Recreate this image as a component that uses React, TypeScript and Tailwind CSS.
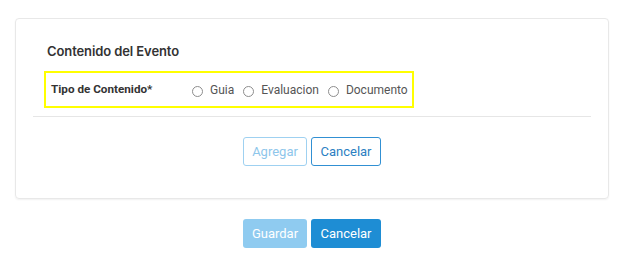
export default function App() {
  const options = ['Guia', 'Evaluacion', 'Documento']

  return (
    <div className="w-[628px] h-[271px] bg-white pt-[18px] font-['Roboto',sans-serif]">
      {/* Card */}
      <div className="ml-[15px] w-[594px] h-[181px] border border-[#e8e8e8] rounded-[4px] shadow-[0_1px_2px_rgba(0,0,0,0.06)] px-[17px] pt-[23px]">
        <div className="pl-[14px] text-[13px] leading-[18px] font-semibold text-[#333] font-['Inter',sans-serif] tracking-[-0.1px]">
          Contenido del Evento
        </div>

        {/* Tipo de contenido */}
        <div className="mt-[11px] ml-[11px] w-[370px] h-[37px] border-2 border-[#ffff00] flex items-center pl-[5px]">
          <span className="w-[141px] text-[11.7px] font-bold text-[#333]">Tipo de Contenido*</span>
          <div className="flex items-center text-[12px] text-[#555]">
            {options.map((o, i) => (
              <label key={o} className={`flex items-center ${i > 0 ? 'ml-[9px]' : ''}`}>
                <span className="w-[11px] h-[11px] rounded-full border border-[#8d8d8d] mt-[3px]" />
                <span className="ml-[7px]">{o}</span>
              </label>
            ))}
          </div>
        </div>

        <div className="mt-[8px] border-t border-[#e6e6e6]" />

        <div className="mt-[20px] flex justify-center gap-[4px]">
          <button className="h-[29px] w-[64px] rounded-[3px] border border-[#9fd1f1] text-[#8ec6eb] text-[13px]">
            Agregar
          </button>
          <button className="h-[29px] w-[70px] rounded-[3px] border border-[#3190d3] text-[#2a80c2] text-[13px]">
            Cancelar
          </button>
        </div>
      </div>

      {/* Footer actions */}
      <div className="ml-[15px] w-[594px] mt-[20px] flex justify-center gap-[4px]">
        <button className="h-[29px] w-[64px] rounded-[3px] bg-[#8fcbf0] text-white text-[13px]">
          Guardar
        </button>
        <button className="h-[29px] w-[70px] rounded-[3px] bg-[#1e8dd4] text-white text-[13px]">
          Cancelar
        </button>
      </div>
    </div>
  )
}
